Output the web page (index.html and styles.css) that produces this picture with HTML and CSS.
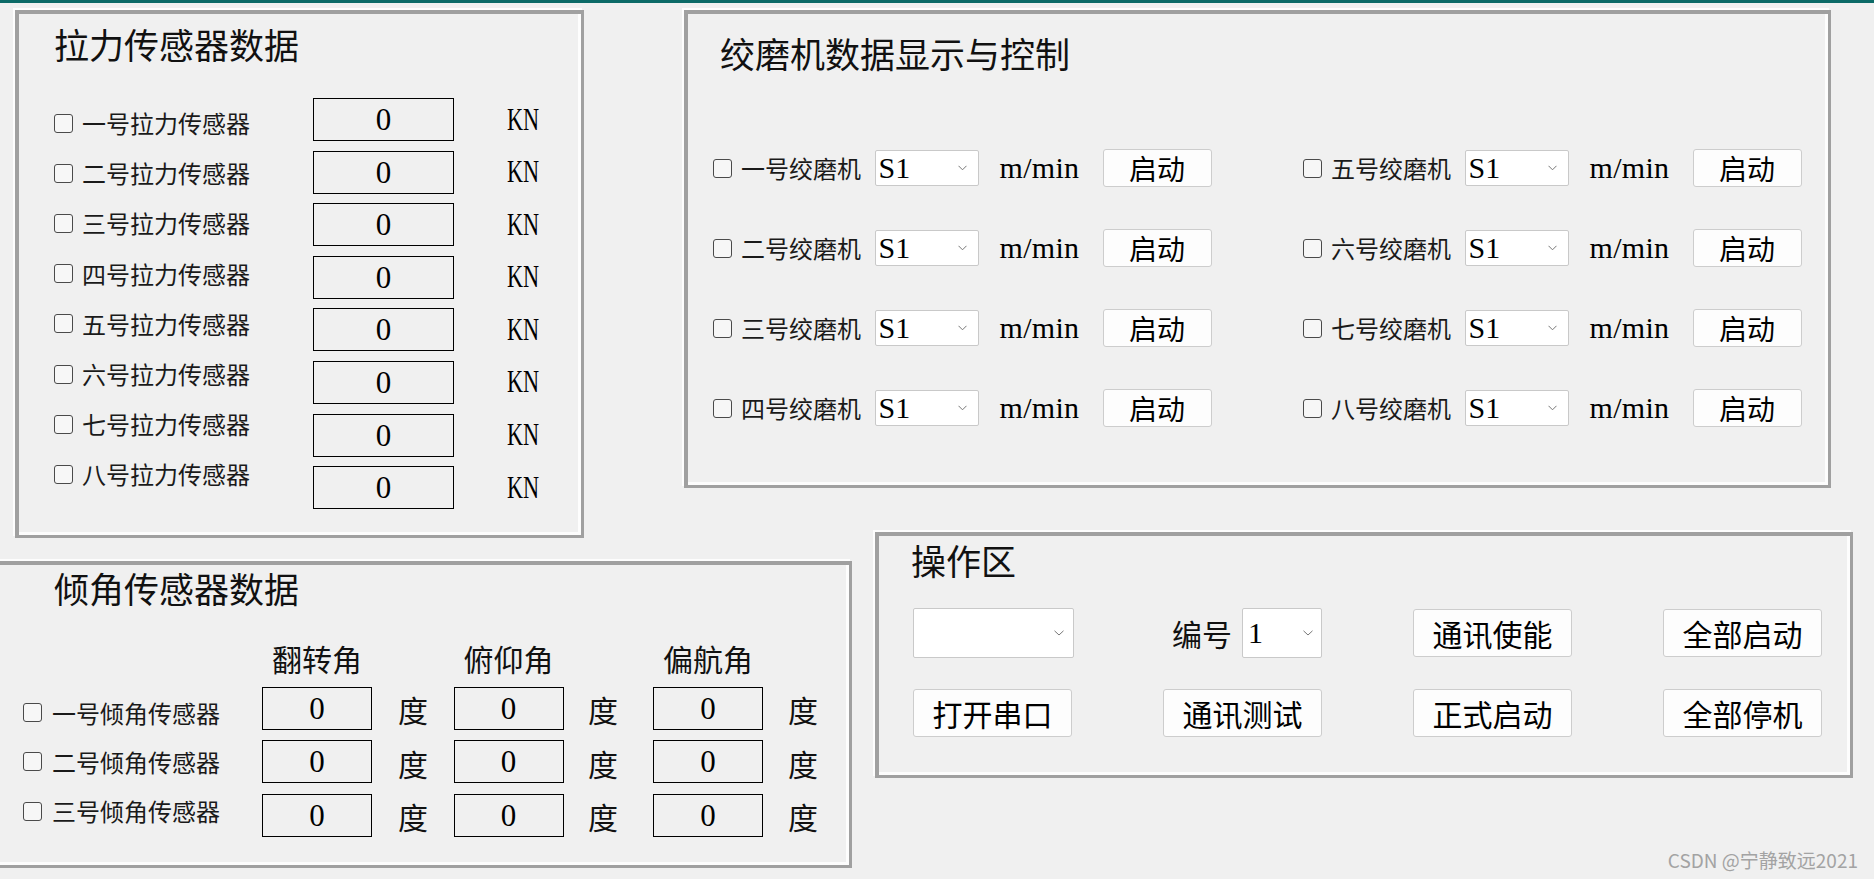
FILE: index.html
```html
<!DOCTYPE html>
<html lang="zh-CN">
<head>
<meta charset="utf-8">
<title>绞磨机控制</title>
<link rel="stylesheet" href="styles.css">
</head>
<body>
<div class="topbar"></div>

<div class="row row-top">
  <section class="panel p-tension">
    <h2 class="title">拉力传感器数据</h2>
    <div class="t-body">
      <div class="t-labels">
        <label class="chk-row"><span class="cb"></span>一号拉力传感器</label>
        <label class="chk-row"><span class="cb"></span>二号拉力传感器</label>
        <label class="chk-row"><span class="cb"></span>三号拉力传感器</label>
        <label class="chk-row"><span class="cb"></span>四号拉力传感器</label>
        <label class="chk-row"><span class="cb"></span>五号拉力传感器</label>
        <label class="chk-row"><span class="cb"></span>六号拉力传感器</label>
        <label class="chk-row"><span class="cb"></span>七号拉力传感器</label>
        <label class="chk-row"><span class="cb"></span>八号拉力传感器</label>
      </div>
      <div class="t-vals">
        <div class="val">0</div><div class="val">0</div><div class="val">0</div><div class="val">0</div>
        <div class="val">0</div><div class="val">0</div><div class="val">0</div><div class="val">0</div>
      </div>
      <div class="t-units">
        <div class="unit">KN</div><div class="unit">KN</div><div class="unit">KN</div><div class="unit">KN</div>
        <div class="unit">KN</div><div class="unit">KN</div><div class="unit">KN</div><div class="unit">KN</div>
      </div>
    </div>
  </section>

  <section class="panel p-winch">
    <h2 class="title w-title">绞磨机数据显示与控制</h2>
    <div class="w-grid">
      <div class="w-item"><span class="cb"></span><span class="w-label">一号绞磨机</span><div class="sel w-sel"><span>S1</span><svg class="chev" width="9" height="6" viewBox="0 0 9 6"><polyline points="0.5,0.8 4.5,4.8 8.5,0.8" fill="none" stroke="#777" stroke-width="1"/></svg></div><span class="mmin">m/min</span><button class="btn w-btn">启动</button></div>
      <div class="w-item"><span class="cb"></span><span class="w-label">五号绞磨机</span><div class="sel w-sel"><span>S1</span><svg class="chev" width="9" height="6" viewBox="0 0 9 6"><polyline points="0.5,0.8 4.5,4.8 8.5,0.8" fill="none" stroke="#777" stroke-width="1"/></svg></div><span class="mmin">m/min</span><button class="btn w-btn">启动</button></div>
      <div class="w-item"><span class="cb"></span><span class="w-label">二号绞磨机</span><div class="sel w-sel"><span>S1</span><svg class="chev" width="9" height="6" viewBox="0 0 9 6"><polyline points="0.5,0.8 4.5,4.8 8.5,0.8" fill="none" stroke="#777" stroke-width="1"/></svg></div><span class="mmin">m/min</span><button class="btn w-btn">启动</button></div>
      <div class="w-item"><span class="cb"></span><span class="w-label">六号绞磨机</span><div class="sel w-sel"><span>S1</span><svg class="chev" width="9" height="6" viewBox="0 0 9 6"><polyline points="0.5,0.8 4.5,4.8 8.5,0.8" fill="none" stroke="#777" stroke-width="1"/></svg></div><span class="mmin">m/min</span><button class="btn w-btn">启动</button></div>
      <div class="w-item"><span class="cb"></span><span class="w-label">三号绞磨机</span><div class="sel w-sel"><span>S1</span><svg class="chev" width="9" height="6" viewBox="0 0 9 6"><polyline points="0.5,0.8 4.5,4.8 8.5,0.8" fill="none" stroke="#777" stroke-width="1"/></svg></div><span class="mmin">m/min</span><button class="btn w-btn">启动</button></div>
      <div class="w-item"><span class="cb"></span><span class="w-label">七号绞磨机</span><div class="sel w-sel"><span>S1</span><svg class="chev" width="9" height="6" viewBox="0 0 9 6"><polyline points="0.5,0.8 4.5,4.8 8.5,0.8" fill="none" stroke="#777" stroke-width="1"/></svg></div><span class="mmin">m/min</span><button class="btn w-btn">启动</button></div>
      <div class="w-item"><span class="cb"></span><span class="w-label">四号绞磨机</span><div class="sel w-sel"><span>S1</span><svg class="chev" width="9" height="6" viewBox="0 0 9 6"><polyline points="0.5,0.8 4.5,4.8 8.5,0.8" fill="none" stroke="#777" stroke-width="1"/></svg></div><span class="mmin">m/min</span><button class="btn w-btn">启动</button></div>
      <div class="w-item"><span class="cb"></span><span class="w-label">八号绞磨机</span><div class="sel w-sel"><span>S1</span><svg class="chev" width="9" height="6" viewBox="0 0 9 6"><polyline points="0.5,0.8 4.5,4.8 8.5,0.8" fill="none" stroke="#777" stroke-width="1"/></svg></div><span class="mmin">m/min</span><button class="btn w-btn">启动</button></div>
    </div>
  </section>
</div>

<div class="row row-bottom">
  <section class="panel p-tilt">
    <h2 class="title tl-title">倾角传感器数据</h2>
    <div class="tl-body">
      <div class="tl-labels">
        <label class="chk-row tl-row"><span class="cb"></span>一号倾角传感器</label>
        <label class="chk-row tl-row"><span class="cb"></span>二号倾角传感器</label>
        <label class="chk-row tl-row"><span class="cb"></span>三号倾角传感器</label>
      </div>
      <div class="tl-grid">
        <div class="hdr">翻转角</div><div></div>
        <div class="hdr">俯仰角</div><div></div>
        <div class="hdr">偏航角</div><div></div>

        <div class="val tl-val">0</div><div class="deg d1">度</div>
        <div class="val tl-val">0</div><div class="deg d2">度</div>
        <div class="val tl-val">0</div><div class="deg d3">度</div>

        <div class="val tl-val">0</div><div class="deg d1">度</div>
        <div class="val tl-val">0</div><div class="deg d2">度</div>
        <div class="val tl-val">0</div><div class="deg d3">度</div>

        <div class="val tl-val">0</div><div class="deg d1">度</div>
        <div class="val tl-val">0</div><div class="deg d2">度</div>
        <div class="val tl-val">0</div><div class="deg d3">度</div>
      </div>
    </div>
  </section>

  <section class="panel p-ops">
    <h2 class="title ops-title">操作区</h2>
    <div class="ops-grid">
      <div class="sel combo"><span></span><svg class="chev" width="10" height="6" viewBox="0 0 10 6"><polyline points="0.5,0.8 5,5 9.5,0.8" fill="none" stroke="#777" stroke-width="1"/></svg></div>
      <div class="num-cell"><span class="num-label">编号</span><div class="sel num-sel"><span>1</span><svg class="chev" width="10" height="6" viewBox="0 0 10 6"><polyline points="0.5,0.8 5,5 9.5,0.8" fill="none" stroke="#777" stroke-width="1"/></svg></div></div>
      <button class="btn ops-btn">通讯使能</button>
      <button class="btn ops-btn">全部启动</button>
      <button class="btn ops-btn">打开串口</button>
      <button class="btn ops-btn">通讯测试</button>
      <button class="btn ops-btn">正式启动</button>
      <button class="btn ops-btn">全部停机</button>
    </div>
  </section>
</div>

<div class="watermark">CSDN @宁静致远2021</div>
</body>
</html>
```
FILE: styles.css
```css
html, body {
  margin: 0;
  padding: 0;
}
body {
  width: 1874px;
  height: 879px;
  overflow: hidden;
  position: relative;
  background: #f0f0f0;
  font-family: "Noto Sans CJK SC", sans-serif;
  color: #111;
}
.topbar {
  height: 3px;
  background: #0c6a67;
}
.row {
  display: flex;
  align-items: flex-start;
}
.row-top {
  margin-top: 7px;
}
.row-bottom {
  margin-top: -6px;
}

/* group frames */
.panel {
  box-sizing: border-box;
  border-style: solid;
  border-color: #a0a0a0;
  border-width: 4px 3px 3px 4px;
  box-shadow: -2px -2px 0 #fdfdfd, inset -3px -3px 0 #fdfdfd;
  background: #f0f0f0;
  flex: none;
}
.title {
  margin: 0;
  font-size: 35px;
  line-height: 35px;
  font-weight: 400;
  color: #111;
  white-space: nowrap;
}

/* common checkbox */
.cb {
  flex: none;
  width: 19px;
  height: 19px;
  box-sizing: border-box;
  border: 1px solid #4a4a4a;
  border-radius: 3px;
  background: #f7f7f7;
}
.chk-row {
  display: flex;
  align-items: center;
  font-size: 24px;
  line-height: 24px;
  white-space: nowrap;
  color: #1a1a1a;
}
.chk-row .cb {
  margin-right: 9px;
}

/* value boxes */
.val {
  box-sizing: border-box;
  border: 1px solid #000;
  display: flex;
  align-items: center;
  justify-content: center;
  font-family: "Liberation Serif", serif;
  font-size: 31px;
  line-height: 31px;
  color: #000;
}

/* tension panel */
.p-tension {
  margin-left: 15px;
  width: 569px;
  height: 528px;
  padding: 11.5px 0 0 35px;
}
.t-body {
  display: flex;
  margin-top: 37.5px;
}
.t-labels {
  width: 259px;
  display: flex;
  flex-direction: column;
}
.t-labels .chk-row {
  height: 50.2px;
}
.t-vals {
  width: 141px;
  display: flex;
  flex-direction: column;
  gap: 9.6px;
}
.t-vals .val {
  height: 43px;
}
.t-units {
  margin-left: 53px;
  display: flex;
  flex-direction: column;
  gap: 9.6px;
}
.unit {
  height: 43px;
  display: flex;
  align-items: center;
  font-family: "Liberation Serif", serif;
  font-size: 31px;
  color: #000;
  transform: scaleX(0.72);
  transform-origin: left center;
}

/* winch panel */
.p-winch {
  margin-left: 100px;
  width: 1147px;
  height: 478px;
  padding: 20.5px 0 0 24.5px;
}
.w-title {
  margin-left: 7.5px;
}
.w-grid {
  display: grid;
  grid-template-columns: 499px 499px;
  grid-auto-rows: 40px;
  column-gap: 91px;
  row-gap: 40px;
  margin-top: 78.5px;
}
.w-item {
  display: flex;
  align-items: center;
}
.w-item .cb {
  margin-right: 9.5px;
}
.w-label {
  width: 133.5px;
  font-size: 24px;
  line-height: 24px;
  white-space: nowrap;
  color: #1a1a1a;
}
.sel {
  box-sizing: border-box;
  background: #fff;
  border: 1px solid #c9c9c9;
  border-radius: 2px;
  display: flex;
  align-items: center;
  justify-content: space-between;
  font-family: "Liberation Serif", serif;
  color: #000;
  flex: none;
}
.w-sel {
  width: 104px;
  height: 36px;
  padding: 0 11px 0 3px;
  font-size: 30px;
  line-height: 30px;
  margin-right: 21px;
}
.chev {
  display: block;
  flex: none;
}
.mmin {
  width: 80px;
  margin-right: 23px;
  font-family: "Liberation Serif", serif;
  font-size: 30px;
  line-height: 30px;
  letter-spacing: 0.3px;
  color: #000;
  white-space: nowrap;
}
.btn {
  box-sizing: border-box;
  margin: 0;
  padding: 0;
  background: #fdfdfd;
  border: 1px solid #cdcdcd;
  border-radius: 3px;
  font-family: "Noto Sans CJK SC", sans-serif;
  color: #000;
  display: flex;
  align-items: center;
  justify-content: center;
  white-space: nowrap;
}
.w-btn {
  width: 109px;
  height: 38px;
  font-size: 28px;
  line-height: 28px;
}

/* tilt panel */
.p-tilt {
  margin-left: -4px;
  margin-top: 29px;
  width: 856px;
  height: 307px;
  padding: 4.5px 0 0 0;
}
.tl-title {
  margin-left: 54px;
}
.tl-body {
  display: flex;
  margin-top: 38.8px;
}
.tl-labels {
  box-sizing: border-box;
  width: 262px;
  padding: 44.7px 0 0 23px;
  display: flex;
  flex-direction: column;
}
.tl-row {
  height: 49.3px;
}
.tl-labels .cb {
  margin-right: 10px;
}
.tl-grid {
  display: grid;
  grid-template-columns: 110px 81.5px 110px 89.5px 110px 60px;
  grid-template-rows: 33.2px 43px 43px 43px;
  row-gap: 10.5px;
}
.hdr {
  font-size: 30px;
  line-height: 30px;
  text-align: center;
  white-space: nowrap;
  color: #111;
}
.tl-val {
  height: 43px;
}
.deg {
  display: flex;
  align-items: center;
  padding-top: 2px;
  font-size: 30px;
  line-height: 30px;
  color: #111;
}
.d1 { padding-left: 26px; }
.d2 { padding-left: 24.5px; }
.d3 { padding-left: 25px; }

/* operations panel */
.p-ops {
  margin-left: 23px;
  width: 978px;
  height: 246px;
  padding: 5.5px 0 0 0;
}
.ops-title {
  margin-left: 32px;
}
.ops-grid {
  display: grid;
  grid-template-columns: repeat(4, 159px);
  grid-template-rows: 50px 48px;
  column-gap: 91px;
  row-gap: 31px;
  margin: 31.5px 0 0 34px;
}
.combo {
  width: 161px;
  height: 50px;
  padding: 0 9px 0 6px;
}
.num-cell {
  display: flex;
  align-items: center;
  justify-content: flex-end;
}
.num-label {
  font-size: 30px;
  line-height: 30px;
  margin-right: 10px;
  white-space: nowrap;
}
.num-sel {
  width: 80px;
  height: 50px;
  padding: 0 8px 0 5px;
  font-size: 30px;
  line-height: 30px;
}
.ops-btn {
  width: 159px;
  height: 48px;
  align-self: center;
  font-size: 30px;
  line-height: 30px;
}

.watermark {
  position: absolute;
  right: 16px;
  top: 850px;
  font-family: "Noto Sans CJK SC", sans-serif;
  font-size: 19px;
  line-height: 19px;
  color: #a3a3a3;
  white-space: nowrap;
}
```
